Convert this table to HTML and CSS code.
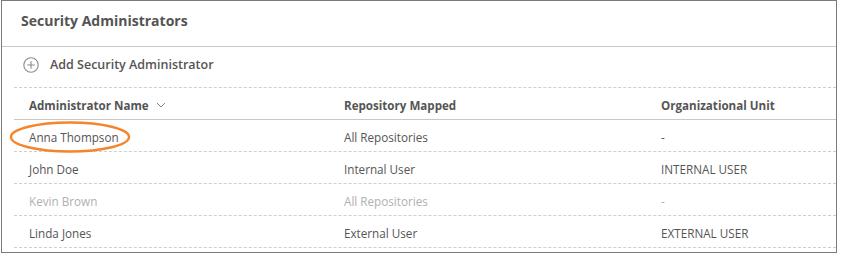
FILE: index.html
```html
<!DOCTYPE html>
<html>
<head>
<meta charset="utf-8">
<link rel="stylesheet" href="styles.css">
</head>
<body>
<div class="frame">
  <div class="title-bar">Security Administrators</div>
  <div class="content">
    <div class="add-row">
      <svg class="add-icon" width="16" height="16" viewBox="0 0 16 16">
        <circle cx="8" cy="8" r="7.2" fill="none" stroke="#8a8a8a" stroke-width="1.1"/>
        <path d="M8 4.2V11.8M4.2 8H11.8" stroke="#8a8a8a" stroke-width="1.1"/>
      </svg>
      <span>Add Security Administrator</span>
    </div>
    <div class="table">
      <div class="row head">
        <div class="cell">Administrator Name
          <svg class="chev" width="10" height="6" viewBox="0 0 10 6"><path d="M1 1L5 5L9 1" fill="none" stroke="#8a8a8a" stroke-width="1"/></svg>
        </div>
        <div class="cell">Repository Mapped</div>
        <div class="cell">Organizational Unit</div>
      </div>
      <div class="row">
        <div class="cell">Anna Thompson</div>
        <div class="cell">All Repositories</div>
        <div class="cell">-</div>
      </div>
      <div class="row">
        <div class="cell">John Doe</div>
        <div class="cell">Internal User</div>
        <div class="cell">INTERNAL USER</div>
      </div>
      <div class="row muted">
        <div class="cell">Kevin Brown</div>
        <div class="cell">All Repositories</div>
        <div class="cell">-</div>
      </div>
      <div class="row">
        <div class="cell">Linda Jones</div>
        <div class="cell">External User</div>
        <div class="cell">EXTERNAL USER</div>
      </div>
    </div>
  </div>
  <svg class="highlight" width="124" height="36" viewBox="0 0 124 36">
    <ellipse cx="62" cy="17" rx="59" ry="14.5" fill="none" stroke="#f5842a" stroke-width="2.4"/>
  </svg>
</div>
</body>
</html>
```
FILE: styles.css
```css
html, body {
  margin: 0;
  padding: 0;
  background: #fff;
}
body {
  font-family: "Open Sans", "Noto Sans", sans-serif;
  color: #555;
}
.frame {
  position: relative;
  box-sizing: border-box;
  width: 836px;
  height: 253px;
  margin-left: 1px;
  border: 1px solid #7b7b7b;
  overflow: hidden;
}
.title-bar {
  height: 46px;
  box-sizing: border-box;
  padding-left: 19px;
  padding-bottom: 7px;
  display: flex;
  align-items: center;
  font-size: 14px;
  font-weight: 700;
  color: #545454;
  border-bottom: 1px solid #c8c8c8;
}
.content {
  margin-left: 12px;
}
.add-row {
  height: 41px;
  box-sizing: border-box;
  display: flex;
  align-items: center;
  gap: 11px;
  padding-left: 9px;
  padding-bottom: 5px;
  font-size: 12.5px;
  font-weight: 600;
  color: #555;
  border-bottom: 1px dashed #cfcfcf;
}
.add-icon {
  display: block;
}
.table {
  display: flex;
  flex-direction: column;
}
.row {
  display: grid;
  grid-template-columns: 315px 317px 1fr;
  height: 32px;
  box-sizing: border-box;
  align-items: center;
  padding-top: 2px;
  border-bottom: 1px dashed #cfcfcf;
  font-size: 11.7px;
}
.row.head {
  font-size: 11.6px;
  font-weight: 700;
  color: #555;
  padding-top: 3px;
  border-bottom: 1px solid #c8c8c8;
}
.cell {
  padding-left: 15px;
  display: flex;
  align-items: center;
  white-space: nowrap;
}
.chev {
  margin-left: 7px;
}
.row.muted {
  color: #b0b0b0;
}
.highlight {
  position: absolute;
  left: 6px;
  top: 119px;
}
```
